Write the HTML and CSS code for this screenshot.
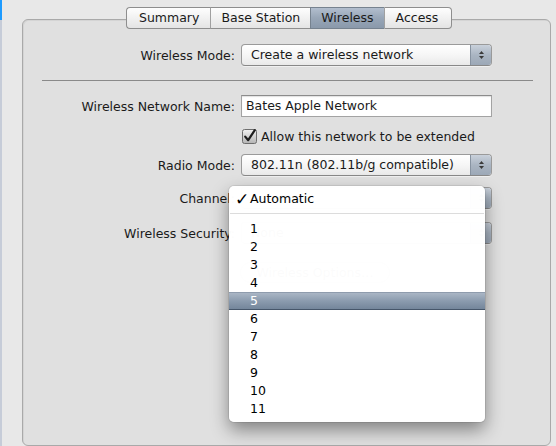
FILE: index.html
```html
<!DOCTYPE html>
<html>
<head>
<meta charset="utf-8">
<link rel="stylesheet" href="styles.css">
</head>
<body>
<div class="window">
  <div class="strip"></div>
  <div class="main">
    <div class="tabbox">
      <div class="tabs">
        <div class="tab tab-first">Summary</div>
        <div class="tab">Base Station</div>
        <div class="tab tab-selected">Wireless</div>
        <div class="tab tab-last">Access</div>
      </div>
      <div class="form">
        <div class="row row-mode">
          <span class="lbl">Wireless Mode:</span>
          <div class="popup">
            <span class="popup-text">Create a wireless network</span>
            <span class="arrows"><svg width="7" height="10" viewBox="0 0 7 10"><path d="M3.5 1 L6 4 L1 4 Z" fill="#3a3a3a"/><path d="M1 6 L6 6 L3.5 9 Z" fill="#3a3a3a"/></svg></span>
          </div>
        </div>
        <div class="sep"></div>
        <div class="row row-name">
          <span class="lbl">Wireless Network Name:</span>
          <div class="field">Bates Apple Network</div>
        </div>
        <div class="row row-check">
          <span class="lbl"></span>
          <div class="check">
            <svg class="cbox" width="15" height="15" viewBox="0 0 15 15">
              <defs><linearGradient id="cg" x1="0" y1="0" x2="0" y2="1"><stop offset="0" stop-color="#f2f2f2"/><stop offset="1" stop-color="#b4b4b4"/></linearGradient></defs>
              <rect x="0.5" y="0.5" width="14" height="14" rx="2" fill="url(#cg)" stroke="#6e6e6e"/>
              <path d="M3.2 7.6 L6.2 11.2 L12.8 1.2" fill="none" stroke="#1e1e1e" stroke-width="2.2" stroke-linecap="round" stroke-linejoin="round"/>
            </svg>
            <span>Allow this network to be extended</span>
          </div>
        </div>
        <div class="row row-radio">
          <span class="lbl">Radio Mode:</span>
          <div class="popup">
            <span class="popup-text">802.11n (802.11b/g compatible)</span>
            <span class="arrows"><svg width="7" height="10" viewBox="0 0 7 10"><path d="M3.5 1 L6 4 L1 4 Z" fill="#3a3a3a"/><path d="M1 6 L6 6 L3.5 9 Z" fill="#3a3a3a"/></svg></span>
          </div>
        </div>
        <div class="row row-channel">
          <span class="lbl">Channel:</span>
          <div class="popup">
            <span class="popup-text">Automatic</span>
            <span class="arrows"><svg width="7" height="10" viewBox="0 0 7 10"><path d="M3.5 1 L6 4 L1 4 Z" fill="#3a3a3a"/><path d="M1 6 L6 6 L3.5 9 Z" fill="#3a3a3a"/></svg></span>
          </div>
        </div>
        <div class="row row-security">
          <span class="lbl">Wireless Security:</span>
          <div class="popup">
            <span class="popup-text">None</span>
            <span class="arrows"><svg width="7" height="10" viewBox="0 0 7 10"><path d="M3.5 1 L6 4 L1 4 Z" fill="#3a3a3a"/><path d="M1 6 L6 6 L3.5 9 Z" fill="#3a3a3a"/></svg></span>
          </div>
        </div>
        <div class="row row-options">
          <span class="lbl"></span>
          <div class="button">Wireless Options…</div>
        </div>
      </div>
    </div>
  </div>
  <div class="menu">
    <div class="item"><span class="chk">✓</span><span>Automatic</span></div>
    <div class="menu-sep"></div>
    <div class="item"><span class="chk"></span><span>1</span></div>
    <div class="item"><span class="chk"></span><span>2</span></div>
    <div class="item"><span class="chk"></span><span>3</span></div>
    <div class="item"><span class="chk"></span><span>4</span></div>
    <div class="item item-hl"><span class="chk"></span><span>5</span></div>
    <div class="item"><span class="chk"></span><span>6</span></div>
    <div class="item"><span class="chk"></span><span>7</span></div>
    <div class="item"><span class="chk"></span><span>8</span></div>
    <div class="item"><span class="chk"></span><span>9</span></div>
    <div class="item"><span class="chk"></span><span>10</span></div>
    <div class="item"><span class="chk"></span><span>11</span></div>
  </div>
</div>
</body>
</html>
```

FILE: styles.css
```css
html, body {
  margin: 0;
  padding: 0;
}
body {
  background: #e8e8e8;
  font-family: "DejaVu Sans", "Liberation Sans", sans-serif;
  font-size: 12.5px;
  color: #1a1a1a;
}
.window {
  position: relative;
  display: flex;
  width: 556px;
  height: 446px;
  overflow: hidden;
  background: #e8e8e8;
}
.strip {
  width: 2px;
  flex: none;
  background: linear-gradient(#1e9bff 0, #1e9bff 20px, #c6ccd8 20px);
}
.main {
  flex: 1;
  padding: 19px 5px 0 20px;
}
.tabbox {
  box-sizing: border-box;
  height: 427px;
  border: 1px solid #a9a9a9;
  border-radius: 6px;
  background: #e0e0e0;
  box-shadow: inset 1px 1px 0 #d4d4d4;
}
.tabs {
  position: relative;
  z-index: 1;
  display: flex;
  margin: -13px 0 0 103px;
}
.tab {
  box-sizing: border-box;
  height: 22px;
  line-height: 20px;
  padding: 0 10px;
  border: 1px solid #8e8e8e;
  border-left: 1px solid #a0a0a0;
  border-right: none;
  background: linear-gradient(#fefefe, #f1f1f1 50%, #e4e4e4);
  color: #1a1a1a;
  white-space: nowrap;
}
.tab-first {
  border-left: 1px solid #8e8e8e;
  border-radius: 4px 0 0 4px;
  padding-left: 12px;
  padding-right: 11px;
}
.tab-last {
  border-right: 1px solid #8e8e8e;
  border-radius: 0 4px 4px 0;
  padding-right: 13px;
  padding-left: 11px;
}
.tab-selected {
  background: linear-gradient(#b2bece, #98a6b7 50%, #8a99ab);
  border-color: #76828f;
}
.form {
  padding-top: 15px;
}
.row {
  display: flex;
  align-items: center;
  gap: 6px;
}
.lbl {
  width: 212px;
  flex: none;
  text-align: right;
  white-space: nowrap;
}
.popup {
  box-sizing: border-box;
  display: flex;
  width: 251px;
  height: 22px;
  border: 1px solid #9a9a9a;
  border-bottom-color: #888;
  border-radius: 4px;
  background: linear-gradient(#ffffff, #f6f6f6 50%, #e9e9e9);
  overflow: hidden;
  box-shadow: 0 1px 0 rgba(255,255,255,0.5);
}
.popup-text {
  flex: 1;
  padding-left: 9px;
  line-height: 20px;
  white-space: nowrap;
}
.arrows {
  width: 20px;
  flex: none;
  display: flex;
  align-items: center;
  justify-content: center;
  border-left: 1px solid #8793a1;
  background: linear-gradient(#c9d1db, #aab5c2 50%, #9ca8b7);
}
.sep {
  height: 1px;
  background: #8a8a8a;
  margin: 14px 17px 14px 19px;
}
.field {
  box-sizing: border-box;
  width: 251px;
  height: 22px;
  line-height: 20px;
  padding-left: 4px;
  border: 1px solid #a3a3a3;
  border-top-color: #8c8c8c;
  background: #fff;
  box-shadow: inset 0 1px 1px rgba(0,0,0,0.12);
}
.row-check {
  margin-top: 12px;
  height: 15px;
}
.check {
  display: flex;
  align-items: center;
  gap: 4px;
  padding-left: 1px;
  white-space: nowrap;
}
.cbox {
  display: block;
}
.row-radio {
  margin-top: 10px;
}
.row-channel {
  margin-top: 11px;
}
.row-security {
  margin-top: 13px;
}
.row-options {
  margin-top: 18px;
}
.button {
  box-sizing: border-box;
  width: 150px;
  height: 21px;
  line-height: 19px;
  margin-left: -1px;
  text-align: center;
  border: 1px solid #9a9a9a;
  border-radius: 11px;
  background: linear-gradient(#ffffff, #f2f2f2 50%, #e2e2e2);
}
.menu {
  position: absolute;
  left: 229px;
  top: 186px;
  width: 256px;
  height: 236px;
  box-sizing: border-box;
  padding: 4px 0;
  background: rgba(255,255,255,0.985);
  border-radius: 5px;
  box-shadow: 0 8px 18px rgba(0,0,0,0.42), 0 0 0 1px rgba(0,0,0,0.08);
  color: #000;
}
.item {
  box-sizing: border-box;
  display: flex;
  height: 18px;
  line-height: 18px;
  padding-left: 7px;
}
.chk {
  width: 14px;
  flex: none;
  font-family: "DejaVu Sans", sans-serif;
  font-size: 17px;
  line-height: 18px;
  margin-left: -1px;
  margin-right: 1px;
}
.menu-sep {
  height: 1px;
  margin: 5px 1px 6px;
  background: #dcdcdc;
}
.item-hl {
  color: #fff;
  line-height: 16px;
  border-top: 1px solid #8f9cad;
  border-bottom: 1px solid #46566a;
  background: linear-gradient(#aab6c5, #8b9bae 50%, #74869b);
}
```
